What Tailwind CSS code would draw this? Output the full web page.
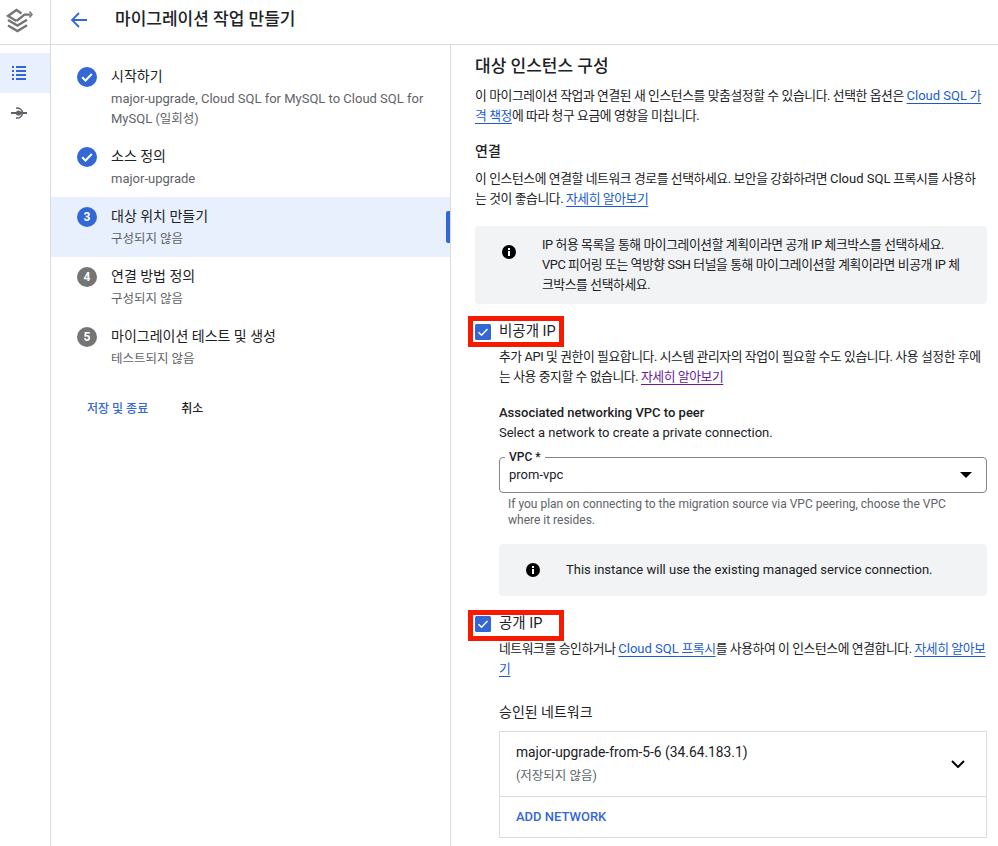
<!DOCTYPE html>
<html lang="ko">
<head>
<meta charset="UTF-8" />
<title>마이그레이션 작업 만들기</title>
<script src="https://cdn.jsdelivr.net/npm/@tailwindcss/browser@4"></script>
</head>
<body class="h-[846px] w-[998px] overflow-hidden bg-white text-[#202124] font-['Roboto','Noto_Sans_CJK_KR',sans-serif]">
<div class="relative flex h-[846px] w-[998px] overflow-hidden">

  <!-- left rail -->
  <aside class="w-[51px] shrink-0 border-r border-[#dadce0]">
    <div class="flex h-[45px] items-start border-b border-[#dadce0] pl-[5px] pt-[7px]">
      <svg class="h-[26px] w-[28px]" viewBox="0 0 28 26" fill="none">
        <path d="M11.500 14 3 9l8.500-6 5 3.500" stroke="#757575" stroke-width="2.300"/>
        <path d="m11.500 14 8-6.300h6" stroke="#757575" stroke-width="2.300"/>
        <path d="m24.500 4.500 2.500 3-2.500 3" stroke="#757575" stroke-width="1.500"/>
        <path d="m3 13 9.500 5.500 9.500-5.800" stroke="#757575" stroke-width="2.400"/>
        <path d="m3 18.500 9.500 5.500 9.500-5.800" stroke="#757575" stroke-width="2.400"/>
      </svg>
    </div>
    <div class="mt-[8px] flex h-[40px] items-center justify-center bg-[#e8f0fe] pr-[13px]">
      <svg class="h-[14px] w-[14px]" viewBox="0 0 14 14" fill="#3367d6">
        <rect x="0" y="0" width="2" height="2"/><rect x="4" y="0" width="10" height="2"/>
        <rect x="0" y="4" width="2" height="2"/><rect x="4" y="4" width="10" height="2"/>
        <rect x="0" y="8" width="2" height="2"/><rect x="4" y="8" width="10" height="2"/>
        <rect x="0" y="12" width="2" height="2"/><rect x="4" y="12" width="10" height="2"/>
      </svg>
    </div>
    <div class="flex h-[40px] items-center justify-center pr-[13px]">
      <svg class="h-[12px] w-[16px]" viewBox="0 0 16 12" fill="none" stroke="#5f6368">
        <path d="M0 6h16" stroke-width="2"/>
        <circle cx="7.500" cy="6" r="2.600" fill="#5f6368" stroke="none"/>
        <path d="M5 1.200a5 5 0 1 1 0 9.600" stroke-width="1.500"/>
      </svg>
    </div>
  </aside>

  <div class="flex min-w-0 flex-1 flex-col">
    <!-- header -->
    <header class="flex h-[45px] shrink-0 items-center border-b border-[#dadce0] pb-[4px]">
      <svg class="ml-[19px] h-[18px] w-[18px]" viewBox="0 0 18 18" fill="none" stroke="#3367d6" stroke-width="1.800">
        <path d="M17 9H2M9 2 2 9l7 7"/>
      </svg>
      <h1 class="ml-[27px] text-[17px] font-medium">마이그레이션 작업 만들기</h1>
    </header>

    <div class="flex min-h-0 flex-1">
      <!-- stepper -->
      <nav class="w-[400px] shrink-0 border-r border-[#dadce0] pt-[12px]">
        <div class="flex h-[80px] pl-[26px] pt-[10px]">
          <svg class="h-[20px] w-[20px] shrink-0" viewBox="0 0 20 20"><circle cx="10" cy="10" r="10" fill="#3367d6"/><path d="m5.200 10.200 3.300 3.300 6.300-6.500" fill="none" stroke="#fff" stroke-width="2"/></svg>
          <div class="ml-[14px] -mt-[1px]">
            <div class="text-[14px] leading-[20px]">시작하기</div>
            <div class="mt-[3px] w-[325px] text-[13px] leading-[20px] text-[#5f6368]">major-upgrade, Cloud SQL for MySQL to Cloud SQL for MySQL <span class="text-[12.500px]">(일회성)</span></div>
          </div>
        </div>
        <div class="flex h-[60px] pl-[26px] pt-[10px]">
          <svg class="h-[20px] w-[20px] shrink-0" viewBox="0 0 20 20"><circle cx="10" cy="10" r="10" fill="#3367d6"/><path d="m5.200 10.200 3.300 3.300 6.300-6.500" fill="none" stroke="#fff" stroke-width="2"/></svg>
          <div class="ml-[14px] -mt-[1px]">
            <div class="text-[14px] leading-[20px]">소스 정의</div>
            <div class="mt-[3px] text-[13px] leading-[20px] text-[#5f6368]">major-upgrade</div>
          </div>
        </div>
        <div class="relative flex h-[60px] bg-[#e8f0fe] pl-[26px] pt-[10px]">
          <div class="flex h-[20px] w-[20px] shrink-0 items-center justify-center rounded-full bg-[#3367d6] text-[12px] font-bold text-white">3</div>
          <div class="ml-[14px] -mt-[1px]">
            <div class="text-[14px] leading-[20px]">대상 위치 만들기</div>
            <div class="mt-[3px] text-[12.500px] leading-[20px] text-[#5f6368]">구성되지 않음</div>
          </div>
          <div class="absolute right-0 top-[14px] h-[32px] w-[4px] rounded-l-[2px] bg-[#3367d6]"></div>
        </div>
        <div class="flex h-[60px] pl-[26px] pt-[10px]">
          <div class="flex h-[20px] w-[20px] shrink-0 items-center justify-center rounded-full bg-[#757575] text-[12px] font-bold text-white">4</div>
          <div class="ml-[14px] -mt-[1px]">
            <div class="text-[14px] leading-[20px]">연결 방법 정의</div>
            <div class="mt-[3px] text-[12.500px] leading-[20px] text-[#5f6368]">구성되지 않음</div>
          </div>
        </div>
        <div class="flex h-[60px] pl-[26px] pt-[10px]">
          <div class="flex h-[20px] w-[20px] shrink-0 items-center justify-center rounded-full bg-[#757575] text-[12px] font-bold text-white">5</div>
          <div class="ml-[14px] -mt-[1px]">
            <div class="text-[14px] leading-[20px]">마이그레이션 테스트 및 생성</div>
            <div class="mt-[3px] text-[12.500px] leading-[20px] text-[#5f6368]">테스트되지 않음</div>
          </div>
        </div>
        <div class="mt-[22px] flex pl-[36px] text-[12px] font-medium leading-[20px]">
          <span class="text-[#3367d6]">저장 및 종료</span>
          <span class="ml-[33px]">취소</span>
        </div>
      </nav>

      <!-- form -->
      <main class="min-w-0 flex-1 pl-[24px] pr-[11px] pt-[10px] text-[12.800px] leading-[20px] tracking-[-0.4px]">
        <h2 class="text-[17px] font-medium leading-[22px] tracking-normal">대상 인스턴스 구성</h2>
        <p class="mt-[9px]">이 마이그레이션 작업과 연결된 새 인스턴스를 맞춤설정할 수 있습니다. 선택한 옵션은 <a class="text-[#1a5ccf] underline underline-offset-[3px]"><span class="text-[13px] tracking-normal">Cloud SQL</span> 가격 책정</a>에 따라 청구 요금에 영향을 미칩니다.</p>
        <h3 class="mt-[15px] text-[14px] font-medium leading-[20px] tracking-normal">연결</h3>
        <p class="mt-[8px] pr-[6px]">이 인스턴스에 연결할 네트워크 경로를 선택하세요. 보안을 강화하려면 <span class="text-[13px] tracking-normal">Cloud SQL</span> 프록시를 사용하는 것이 좋습니다. <a class="text-[#1a5ccf] underline underline-offset-[3px]">자세히 알아보기</a></p>

        <div class="mt-[17px] flex h-[78px] items-start rounded-[4px] bg-[#f1f3f4] pr-[18px] pt-[9px]">
          <svg class="ml-[27px] mt-[10px] h-[14px] w-[14px] shrink-0" viewBox="0 0 14 14"><circle cx="7" cy="7" r="7" fill="#000"/><rect x="6" y="6" width="2" height="5" fill="#fff"/><rect x="6" y="3" width="2" height="2" fill="#fff"/></svg>
          <p class="ml-[26px]">IP 허용 목록을 통해 마이그레이션할 계획이라면 공개 IP 체크박스를 선택하세요. VPC 피어링 또는 역방향 SSH 터널을 통해 마이그레이션할 계획이라면 비공개 IP 체크박스를 선택하세요.</p>
        </div>

        <label class="mt-[18px] flex h-[20px] items-center tracking-normal">
          <svg class="h-[16px] w-[16px] shrink-0" viewBox="0 0 16 16"><rect width="16" height="16" rx="1.500" fill="#3367d6"/><path d="m3.500 8.200 3 3 6-6.200" fill="none" stroke="#fff" stroke-width="1.500"/></svg>
          <span class="ml-[8px] text-[14.500px]">비공개 IP</span>
        </label>

        <div class="pl-[24px]">
          <p class="mt-[5px]">추가 API 및 권한이 필요합니다. 시스템 관리자의 작업이 필요할 수도 있습니다. 사용 설정한 후에는 사용 중지할 수 없습니다. <a class="text-[#6a1b9a] underline underline-offset-[3px]">자세히 알아보기</a></p>
          <p class="mt-[16px] text-[13px] font-medium tracking-normal">Associated networking VPC to peer</p>
          <p class="text-[13px] tracking-normal">Select a network to create a private connection.</p>

          <div class="relative mt-[14px] flex h-[36px] items-center justify-between rounded-[4px] border border-[#80868b] pl-[9px] pr-[8px] tracking-normal">
            <span class="absolute left-[5px] top-[-10px] bg-white px-[4px] text-[12px] font-medium leading-[18px]">VPC *</span>
            <span class="text-[13px]">prom-vpc</span>
            <svg class="mr-[6px] h-[6px] w-[12px]" viewBox="0 0 12 6"><path d="M0 0h12L6 6z" fill="#000"/></svg>
          </div>
          <p class="mt-[3px] px-[9px] text-[12px] leading-[16px] tracking-normal text-[#5f6368]">If you plan on connecting to the migration source via VPC peering, choose the VPC where it resides.</p>

          <div class="mt-[16px] flex h-[52px] items-center rounded-[4px] bg-[#f1f3f4] tracking-normal">
            <svg class="ml-[27px] h-[14px] w-[14px] shrink-0" viewBox="0 0 14 14"><circle cx="7" cy="7" r="7" fill="#000"/><rect x="6" y="6" width="2" height="5" fill="#fff"/><rect x="6" y="3" width="2" height="2" fill="#fff"/></svg>
            <p class="ml-[26px] text-[13px]">This instance will use the existing managed service connection.</p>
          </div>
        </div>

        <label class="mt-[18px] flex h-[20px] items-center tracking-normal">
          <svg class="h-[16px] w-[16px] shrink-0" viewBox="0 0 16 16"><rect width="16" height="16" rx="1.500" fill="#3367d6"/><path d="m3.500 8.200 3 3 6-6.200" fill="none" stroke="#fff" stroke-width="1.500"/></svg>
          <span class="ml-[8px] text-[14.500px]">공개 IP</span>
        </label>

        <div class="pl-[24px]">
          <p class="mt-[5px]">네트워크를 승인하거나 <a class="text-[#1a5ccf] underline underline-offset-[3px]"><span class="text-[13px] tracking-normal">Cloud SQL</span> 프록시</a>를 사용하여 이 인스턴스에 연결합니다. <a class="text-[#1a5ccf] underline underline-offset-[3px]">자세히 알아보기</a></p>
          <h3 class="mt-[23px] text-[14px] leading-[20px] tracking-normal">승인된 네트워크</h3>
          <div class="mt-[9px] border border-[#dadce0] tracking-normal">
            <div class="flex h-[65px] items-center justify-between border-b border-[#dadce0] pl-[16px] pr-[21px]">
              <div>
                <div class="text-[13.800px]">major-upgrade-from-5-6 (34.64.183.1)</div>
                <div class="mt-[4px] text-[12.500px] text-[#5f6368]">(저장되지 않음)</div>
              </div>
              <svg class="h-[8px] w-[14px]" viewBox="0 0 14 8" fill="none" stroke="#000" stroke-width="2"><path d="m1 1 6 6 6-6"/></svg>
            </div>
            <div class="flex h-[40px] items-center pl-[16px] text-[13px] font-medium text-[#3367d6]">ADD NETWORK</div>
          </div>
        </div>
      </main>
    </div>
  </div>

  <!-- red annotation boxes over the checkboxes -->
  <div class="absolute left-[468px] top-[316px] h-[31px] w-[96px] border-[5px] border-[#f61b00]"></div>
  <div class="absolute left-[468px] top-[610px] h-[31px] w-[96px] border-[5px] border-[#f61b00]"></div>
</div>
</body>
</html>
